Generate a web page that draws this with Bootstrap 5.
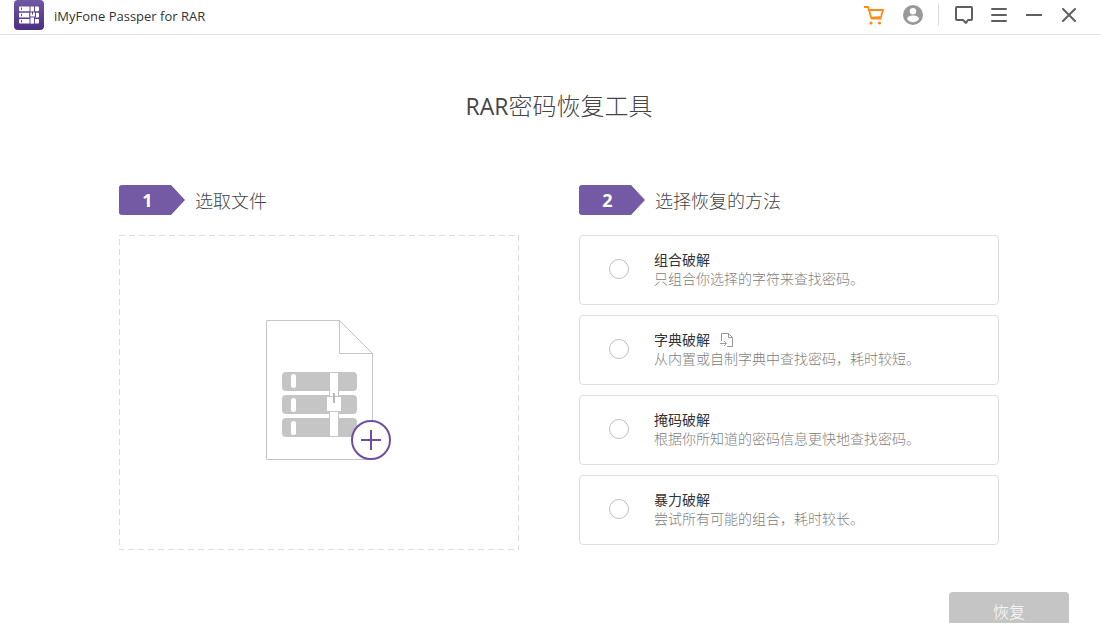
<!DOCTYPE html>
<html lang="zh-CN">
<head>
<meta charset="utf-8">
<meta name="viewport" content="width=device-width, initial-scale=1">
<title>iMyFone Passper for RAR</title>
<link href="https://cdn.jsdelivr.net/npm/bootstrap@5.3.0/dist/css/bootstrap.min.css" rel="stylesheet">
<style>
  body { font-family: "Open Sans", "Noto Sans CJK SC", sans-serif; color: #454545; background: #fff; }
  .titlebar { height: 35px; padding: 0 20px 4px 14px; border-bottom: 1px solid #e4e4e4; }
  .brand { gap: 10px; }
  .app-name { font-size: 13px; line-height: 20px; padding-top: 2px; color: #333; }
  .tool { width: 24px; height: 30px; padding: 0; border: 0; background: none; color: #5f5f5f; }
  .tool svg { display: block; margin: auto; }
  .tools { gap: 11px; }
  .divider { width: 1px; height: 22px; margin: 0 2px; background: #dcdcdc; }
  main { padding: 53px 102px 0 119px; }
  h1 { font-size: 24px; line-height: 36px; font-weight: 300; margin-bottom: 61px; }
  .latin { font-size: 23px; font-weight: 400; }
  .steps { display: grid; grid-template-columns: 20fr 21fr; column-gap: 60px; }
  .step-head { gap: 10px; margin-bottom: 20px; height: 30px; }
  .step-no { width: 66px; height: 30px; padding-right: 9px; background: #7459a4; color: #fff; font-size: 18px; line-height: 30px;
    font-weight: 700; text-align: center; border-radius: 3px 0 0 3px; clip-path: polygon(0 0, 52px 0, 100% 50%, 52px 100%, 0 100%); }
  h2 { font-size: 18px; line-height: 30px; font-weight: 300; margin: 1px 0 0; }
  .drop { width: 100%; height: 315px; padding: 0 0 6px 20px; background: none; border: 0; }
  .drop-frame { width: 100%; height: 315px; pointer-events: none; }
  .options { display: grid; gap: 10px; }
  .option { height: 70px; padding: 0 29px 2px; gap: 25px; border: 1px solid #dedede; border-radius: 4px; cursor: pointer; }
  .option .form-check-input { width: 20px; height: 20px; margin: 0; border: 1px solid #c0c0c0; flex: none; }
  .opt-name { font-size: 14px; line-height: 19px; color: #333; gap: 10px; }
  .opt-desc { font-size: 14px; line-height: 19px; font-weight: 300; color: #808080; }
  .import { padding: 0; border: 0; background: none; line-height: 0; }
  footer { padding: 42px 32px 0 0; }
  .recover, .recover:disabled { width: 120px; height: 40px; padding: 0; font-size: 16px; font-weight: 300; color: #fff;
    background: #c5c5c5; border: 0; border-radius: 4px; opacity: 1; }
</style>
</head>
<body class="vh-100 overflow-hidden">
<header class="titlebar d-flex align-items-center justify-content-between">
  <div class="brand d-flex align-items-center">
    <svg width="30" height="30" viewBox="0 0 30 30" aria-hidden="true">
      <defs><linearGradient id="lg" x1="0" y1="0" x2="0" y2="1"><stop offset="0" stop-color="#7158a3"/><stop offset="1" stop-color="#4a2f82"/></linearGradient></defs>
      <rect width="30" height="30" rx="4" fill="url(#lg)"/>
      <g fill="#fff"><rect x="5" y="6.500" width="20" height="4.700" rx="1"/><rect x="5" y="12.700" width="20" height="4.700" rx="1"/><rect x="5" y="18.900" width="20" height="4.700" rx="1"/></g>
      <g fill="#674c99"><rect x="7" y="7.500" width="1" height="2.500"/><rect x="7" y="13.700" width="1" height="2.500"/><rect x="7" y="19.900" width="1" height="2.500"/><rect x="15.500" y="6" width="5.500" height="18"/></g>
      <path d="M16.500 6.500H20v17.100h-3.500z" fill="#fff"/>
      <path d="M15.800 12h5.700v5h-5.700z" fill="#fff" stroke="#5e4292"/><path d="M18.500 11.500v3" stroke="#5e4292"/>
    </svg>
    <span class="app-name">iMyFone Passper for RAR</span>
  </div>
  <div class="tools d-flex align-items-center">
    <button class="tool me-1" aria-label="购买"><svg width="22" height="20" viewBox="0 0 22 20" fill="none" stroke="#ff8a16" stroke-width="1.800"><path d="M1 2h4l3.500 11.500h10M6 5h14l-2 7-10 .8"/><circle cx="8" cy="18" r="1.600" fill="#ff8a16" stroke="none"/><circle cx="16.500" cy="18" r="1.600" fill="#ff8a16" stroke="none"/></svg></button>
    <button class="tool" aria-label="账户"><svg width="20" height="20" viewBox="0 0 20 20"><circle cx="10" cy="10" r="10" fill="#999"/><circle cx="10" cy="6.200" r="3.200" fill="#fff"/><path d="M4 14c0-2 3-3.500 6-3.500s6 1.500 6 3.500c-1.300 2-3.500 3.200-6 3.200S5.300 16 4 14z" fill="#fff"/></svg></button>
    <span class="divider"></span>
    <button class="tool" aria-label="反馈"><svg width="20" height="20" viewBox="0 0 20 20" fill="none" stroke="currentColor" stroke-width="2" stroke-linejoin="round"><path d="M3 2h14q1 0 1 1v11q0 1-1 1h-3L12 18 9 15H3q-1 0-1-1V3q0-1 1-1z"/></svg></button>
    <button class="tool" aria-label="菜单"><svg width="16" height="14" viewBox="0 0 16 14" stroke="currentColor" stroke-width="2" stroke-linecap="round"><path d="M1 1h14M1 7h14M1 13h14"/></svg></button>
    <button class="tool" aria-label="最小化"><svg width="16" height="14" viewBox="0 0 16 14" stroke="currentColor" stroke-width="2"><path d="M0 7h16"/></svg></button>
    <button class="tool" aria-label="关闭"><svg width="14" height="14" viewBox="0 0 14 14" stroke="currentColor" stroke-width="2" stroke-linecap="round"><path d="M1 1l12 12M13 1L1 13"/></svg></button>
  </div>
</header>
<main>
  <h1 class="text-center"><span class="latin">RAR</span>密码恢复工具</h1>
  <div class="steps">
    <section>
      <div class="step-head d-flex"><span class="step-no">1</span><h2>选取文件</h2></div>
      <div class="position-relative">
        <svg class="drop-frame position-absolute top-0 start-0" aria-hidden="true"><rect x="0" y="0" width="100%" height="100%" fill="none" stroke="#dcdcdc" stroke-width="2" stroke-dasharray="6 4"/></svg>
        <button class="drop d-flex align-items-center justify-content-center" aria-label="选取文件">
          <svg width="126" height="142" viewBox="0 0 126 142" fill="none">
            <path d="M.5 1.500h73l33 33v106H.5zM73.500 1.500v33h33" stroke="#c5c5c5"/>
            <g fill="#c5c5c5"><rect x="16" y="53" width="75" height="19" rx="4"/><rect x="16" y="76" width="75" height="19" rx="4"/><rect x="16" y="99" width="75" height="19" rx="4"/></g>
            <g fill="#fff"><rect x="25" y="55" width="5" height="14" rx="2.500"/><rect x="25" y="79" width="5" height="14" rx="2.500"/><rect x="25" y="102" width="5" height="14" rx="2.500"/></g>
            <path d="M63.500 53.500h9v64h-9z" fill="#fff" stroke="#c5c5c5"/>
            <rect x="60.500" y="77.500" width="15" height="15" rx="1" fill="#fff" stroke="#c5c5c5"/><path d="M68 74v10" stroke="#b8b8b8" stroke-width="2"/>
            <circle cx="105" cy="121" r="19" fill="#fff" stroke="#6c509f" stroke-width="2"/><path d="M95 121h20M105 111v20" stroke="#6c509f" stroke-width="2"/>
          </svg>
        </button>
      </div>
    </section>
    <section>
      <div class="step-head d-flex"><span class="step-no">2</span><h2>选择恢复的方法</h2></div>
      <div class="options">
        <label class="option d-flex align-items-center"><input class="form-check-input" type="radio" name="method">
          <span><span class="opt-name d-flex">组合破解</span><span class="opt-desc d-block">只组合你选择的字符来查找密码。</span></span></label>
        <label class="option d-flex align-items-center"><input class="form-check-input" type="radio" name="method">
          <span><span class="opt-name d-flex align-items-center">字典破解<button class="import" aria-label="导入字典"><svg width="14" height="14" viewBox="0 0 14 14" fill="none" stroke="#999"><path d="M1.500 8V.5h7l4 4v9H7M8.500.5v4h4M0 10.500h6M4 8l2.500 2.500L4 13"/></svg></button></span><span class="opt-desc d-block">从内置或自制字典中查找密码，耗时较短。</span></span></label>
        <label class="option d-flex align-items-center"><input class="form-check-input" type="radio" name="method">
          <span><span class="opt-name d-flex">掩码破解</span><span class="opt-desc d-block">根据你所知道的密码信息更快地查找密码。</span></span></label>
        <label class="option d-flex align-items-center"><input class="form-check-input" type="radio" name="method">
          <span><span class="opt-name d-flex">暴力破解</span><span class="opt-desc d-block">尝试所有可能的组合，耗时较长。</span></span></label>
      </div>
    </section>
  </div>
</main>
<footer class="d-flex justify-content-end"><button class="btn recover" disabled>恢复</button></footer>
<script src="https://cdn.jsdelivr.net/npm/bootstrap@5.3.0/dist/js/bootstrap.bundle.min.js"></script>
</body>
</html>
